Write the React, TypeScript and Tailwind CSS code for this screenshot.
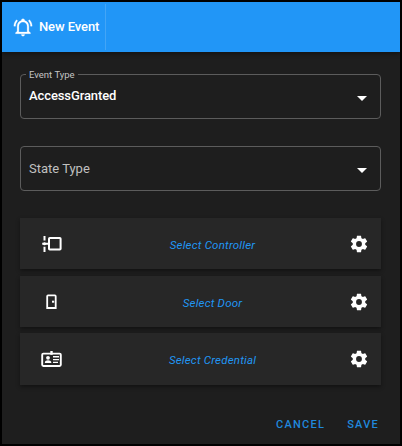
import type { ReactNode } from "react";

function BellIcon() {
  return (
    <svg viewBox="0 0 24 24" className="size-5 shrink-0" fill="currentColor" stroke="currentColor" strokeWidth="0.3">
      <path d="M10 21H14C14 22.1 13.1 23 12 23S10 22.1 10 21M21 19V20H3V19L5 17V11C5 7.9 7 5.2 10 4.3V4C10 2.9 10.9 2 12 2S14 2.9 14 4V4.3C17 5.2 19 7.9 19 11V17L21 19M17 11C17 8.2 14.8 6 12 6S7 8.2 7 11V18H17V11M19.8 3.2L18.4 4.6C20 6.3 21 8.6 21 11H23C23 8.1 21.9 5.3 19.8 3.2M1 11H3C3 8.6 4 6.3 5.6 4.6L4.2 3.2C2.1 5.3 1 8.1 1 11Z" />
    </svg>
  );
}

function CogIcon() {
  return (
    <svg viewBox="0 0 24 24" className="size-5 shrink-0" fill="currentColor">
      <path d="M12,15.5A3.5,3.5 0 0,1 8.5,12A3.5,3.5 0 0,1 12,8.5A3.5,3.5 0 0,1 15.5,12A3.5,3.5 0 0,1 12,15.5M19.43,12.97C19.47,12.65 19.5,12.33 19.5,12C19.5,11.67 19.47,11.34 19.43,11L21.54,9.37C21.73,9.22 21.78,8.95 21.66,8.73L19.66,5.27C19.54,5.05 19.27,4.96 19.05,5.05L16.56,6.05C16.04,5.66 15.5,5.32 14.87,5.07L14.5,2.42C14.46,2.18 14.25,2 14,2H10C9.75,2 9.54,2.18 9.5,2.42L9.13,5.07C8.5,5.32 7.96,5.66 7.44,6.05L4.95,5.05C4.73,4.96 4.46,5.05 4.34,5.27L2.34,8.73C2.21,8.95 2.27,9.22 2.46,9.37L4.57,11C4.53,11.34 4.5,11.67 4.5,12C4.5,12.33 4.53,12.65 4.57,12.97L2.46,14.63C2.27,14.78 2.21,15.05 2.34,15.27L4.34,18.73C4.46,18.95 4.73,19.03 4.95,18.95L7.44,17.94C7.96,18.34 8.5,18.68 9.13,18.93L9.5,21.58C9.54,21.82 9.75,22 10,22H14C14.25,22 14.46,21.82 14.5,21.58L14.87,18.93C15.5,18.67 16.04,18.34 16.56,17.94L19.05,18.95C19.27,19.03 19.54,18.95 19.66,18.73L21.66,15.27C21.78,15.05 21.73,14.78 21.54,14.63L19.43,12.97Z" />
    </svg>
  );
}

function ControllerIcon() {
  return (
    <svg viewBox="0 0 24 20" className="h-5 w-6" fill="none" stroke="currentColor" strokeWidth="2">
      <rect x="9" y="4" width="11.6" height="11.6" rx="0.8" />
      <path d="M4.5 2V6.6M4.5 12.8V18M2.2 9.8H9" />
      <circle cx="4.5" cy="9.8" r="1.5" fill="currentColor" stroke="none" />
    </svg>
  );
}

function DoorIcon() {
  return (
    <svg viewBox="0 0 24 20" className="h-5 w-6" fill="none" stroke="currentColor" strokeWidth="1.8">
      <path d="M7.2 16V4.2Q7.2 3.4 8 3.4H14.9Q15.7 3.4 15.7 4.2V16Z" />
      <path d="M12 9.7H14.2" strokeWidth="2" />
    </svg>
  );
}

function CredentialIcon() {
  return (
    <svg viewBox="0 0 24 20" className="h-5 w-6" fill="none" stroke="currentColor">
      <rect x="2.2" y="4.6" width="18.6" height="12.4" rx="1.2" strokeWidth="1.9" />
      <path d="M11.5 2V5.8" strokeWidth="2.4" />
      <circle cx="8" cy="8.8" r="1.9" fill="currentColor" stroke="none" />
      <path d="M4.8 13.9C4.8 11.9 6.6 11.3 8 11.3S11.4 11.9 11.4 13.9Z" fill="currentColor" stroke="none" />
      <path d="M13 7.8H19M13 10.6H19M13 13.4H18" strokeWidth="1.4" />
    </svg>
  );
}

function Arrow() {
  return (
    <svg viewBox="0 0 10 5" className="mt-[3px] h-[5px] w-[10px]" fill="white">
      <path d="M0 0H10L5 5Z" />
    </svg>
  );
}

function DeviceRow({ icon, label }: { icon: ReactNode; label: string }) {
  return (
    <div className="grid h-[51px] grid-cols-[64px_1fr_40px] items-center bg-[#272727] shadow-[0_2px_4px_rgba(0,0,0,0.4)] last:-mt-px last:h-[52px]">
      <div className="pl-5">{icon}</div>
      <button className="pt-[2px] text-center text-[11.5px] leading-4 tracking-[0.2px] text-[#2196f3] italic">{label}</button>
      <button className="flex justify-end pr-3">
        <CogIcon />
      </button>
    </div>
  );
}

export default function App() {
  return (
    <div className="h-[446px] w-[402px] bg-black p-[2px] font-['Roboto',sans-serif] text-white">
      <div className="flex h-[442px] flex-col bg-[#1e1e1e]">
        <header className="flex h-[50px] shrink-0 items-center bg-[#2196f7] pl-[11px] shadow-[0_2px_4px_rgba(0,0,0,0.35)]">
          <div className="flex h-[46px] w-[93px] items-center gap-[6px] border-r border-[#43a5f6]">
            <BellIcon />
            <span className="whitespace-nowrap text-[13px] font-medium tracking-[-0.1px]">New Event</span>
          </div>
        </header>
        <main className="flex flex-col pr-[19px] pl-[18px] pt-[22px]">
          <div className="relative flex h-[45px] items-center justify-between rounded-[4px] border border-[#5c5c5c] pr-[13px] pl-2">
            <label className="absolute -top-[6px] left-[5px] bg-[#1e1e1e] px-[3px] text-[9.5px] leading-[12px] text-[#c4c4c4]">Event Type</label>
            <span className="pb-[2px] text-[13px] leading-4 font-medium tracking-[-0.1px]">AccessGranted</span>
            <Arrow />
          </div>
          <div className="mt-[27px] flex h-[45px] items-center justify-between rounded-[4px] border border-[#5c5c5c] pr-[13px] pl-2">
            <span className="text-[13px] text-[#c0c0c0]">State Type</span>
            <Arrow />
          </div>
          <div className="mt-[27px] flex flex-col gap-[7px]">
            <DeviceRow icon={<ControllerIcon />} label="Select Controller" />
            <DeviceRow icon={<DoorIcon />} label="Select Door" />
            <DeviceRow icon={<CredentialIcon />} label="Select Credential" />
          </div>
        </main>
        <footer className="mt-auto flex justify-end gap-[22px] pr-[21px] pb-[11px] text-[11px] leading-4 font-medium tracking-[1.25px] text-[#2088dc]">
          <button>CANCEL</button>
          <button>SAVE</button>
        </footer>
      </div>
    </div>
  );
}
